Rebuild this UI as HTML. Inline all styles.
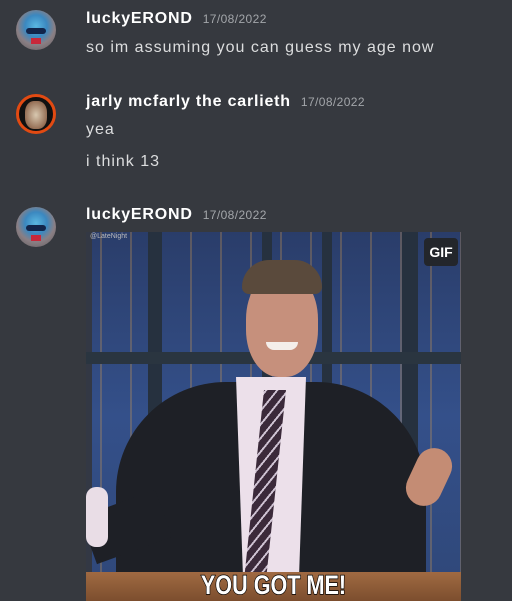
<!DOCTYPE html>
<html><head><style>
body{margin:0;width:512px;height:601px;background:#36393f;overflow:hidden;font-family:"Liberation Sans",sans-serif;position:relative}
.av{position:absolute;left:16px;width:40px;height:40px;border-radius:50%;overflow:hidden}
.name{position:absolute;left:86px;color:#fff;font-size:16px;font-weight:bold;letter-spacing:0.8px}
.ts{color:#a3a6aa;font-size:12px;font-weight:normal;margin-left:10px;letter-spacing:0.4px}
.msg{position:absolute;left:86px;color:#dcddde;font-size:16px;letter-spacing:1px}
.abs{position:absolute}
</style></head><body>
<div class="av" style="top:10px;background:radial-gradient(circle at 50% 40%,#5ab7e0 0,#3b88c0 35%,#8a7f84 60%,#5f5a5c 100%)">
 <div class="abs" style="left:10px;top:18px;width:20px;height:6px;background:#12254a;border-radius:3px"></div>
 <div class="abs" style="left:15px;top:28px;width:10px;height:6px;background:#c8283a"></div></div>
<div class="name" style="top:10px">luckyEROND<span class="ts">17/08/2022</span></div>
<div class="msg" style="top:39px">so im assuming you can guess my age now</div>

<div class="av" style="top:94px;background:#111;border:3px solid #e24a12;width:34px;height:34px">
 <div class="abs" style="left:6px;top:4px;width:22px;height:28px;background:radial-gradient(#d8c8b0,#7a4a30);border-radius:40%"></div></div>
<div class="name" style="top:93px">jarly mcfarly the carlieth<span class="ts">17/08/2022</span></div>
<div class="msg" style="top:121px">yea</div>
<div class="msg" style="top:153px">i think 13</div>

<div class="av" style="top:207px;background:radial-gradient(circle at 50% 40%,#5ab7e0 0,#3b88c0 35%,#8a7f84 60%,#5f5a5c 100%)">
 <div class="abs" style="left:10px;top:18px;width:20px;height:6px;background:#12254a;border-radius:3px"></div>
 <div class="abs" style="left:15px;top:28px;width:10px;height:6px;background:#c8283a"></div></div>
<div class="name" style="top:206px">luckyEROND<span class="ts">17/08/2022</span></div>

<div class="abs" style="left:86px;top:232px;width:375px;height:369px;overflow:hidden;background:linear-gradient(180deg,#2a3d6a,#34508a 50%,#2f4778)">
 <div class="abs" style="left:0;top:0;width:375px;height:369px;background:repeating-linear-gradient(90deg,transparent 0 14px,rgba(240,170,70,.25) 14px 16px,transparent 16px 30px)"></div>
 <div class="abs" style="left:0;top:0;width:6px;height:369px;background:#333844"></div>
 <div class="abs" style="left:62px;top:0;width:14px;height:369px;background:#26313f"></div>
 <div class="abs" style="left:176px;top:0;width:10px;height:369px;background:#26313f"></div>
 <div class="abs" style="left:236px;top:0;width:10px;height:369px;background:#26313f"></div>
 <div class="abs" style="left:316px;top:0;width:16px;height:369px;background:#26313f"></div>
 <div class="abs" style="left:0;top:120px;width:375px;height:12px;background:#2a3540"></div>
 <div class="abs" style="left:338px;top:6px;width:34px;height:28px;background:#23262b;border-radius:4px;color:#fff;font-weight:bold;font-size:14px;text-align:center;line-height:28px">GIF</div>
 <div class="abs" style="left:4px;top:1px;color:#bbb;font-size:7px">@LateNight</div>
 <div class="abs" style="left:30px;top:150px;width:310px;height:240px;background:#1e2026;border-radius:110px 110px 0 0"></div>
 <div class="abs" style="left:0;top:270px;width:80px;height:50px;background:#1e2026;transform:rotate(-20deg)"></div>
 <div class="abs" style="left:0;top:255px;width:22px;height:60px;background:#e9dde6;border-radius:10px"></div>
 <div class="abs" style="left:325px;top:215px;width:36px;height:60px;background:#c48c74;border-radius:20px;transform:rotate(25deg)"></div>
 <div class="abs" style="left:150px;top:145px;width:70px;height:200px;background:#ece0ea;clip-path:polygon(0 0,100% 0,90% 100%,10% 100%)"></div>
 <div class="abs" style="left:168px;top:158px;width:22px;height:190px;background:repeating-linear-gradient(-55deg,#3b2a3a 0 7px,#cfc3d3 7px 9px);transform:skewX(-6deg)"></div>
 <div class="abs" style="left:160px;top:40px;width:72px;height:105px;background:#c6907c;border-radius:45%"></div>
 <div class="abs" style="left:156px;top:28px;width:80px;height:34px;background:#5a4a3c;border-radius:40px 40px 10px 10px"></div>
 <div class="abs" style="left:180px;top:110px;width:32px;height:8px;background:#f4eeea;border-radius:0 0 16px 16px"></div>
 <div class="abs" style="left:0;top:340px;width:375px;height:29px;background:linear-gradient(#a06a42,#7c4e2e)"></div>
 <div class="abs" style="left:0;top:338px;width:375px;text-align:center;color:#fff;font-weight:bold;font-size:27px;transform:scaleX(.8);-webkit-text-stroke:1.5px #000;paint-order:stroke fill">YOU GOT ME!</div>
</div>
</body></html>
